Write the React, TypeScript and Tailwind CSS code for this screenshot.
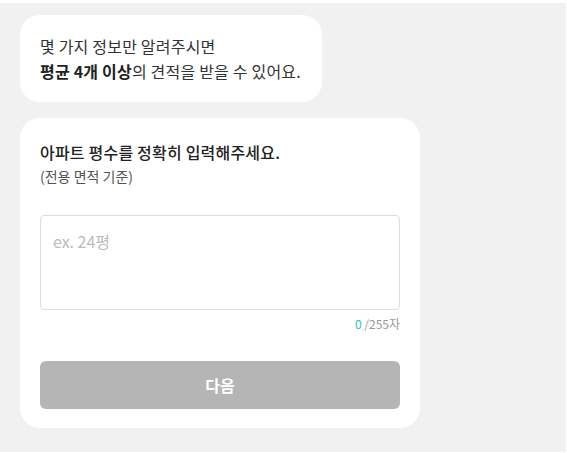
const font = { fontFamily: '"Noto Sans CJK KR", "Noto Sans", sans-serif' };

export default function App() {
  return (
    <div className="h-[453px] w-[567px] bg-white pt-[3px] pr-px" style={font}>
      <div className="h-[449px] bg-[#f1f1f1] px-5 pt-3">
        <div className="inline-block rounded-[20px] bg-white pt-[19px] pb-[18px] pl-5 pr-[21px] text-[16px] leading-[25px] tracking-[0.2px] text-[#333]">
          <p>몇 가지 정보만 알려주시면</p>
          <p>
            <span className="font-bold text-[#222]">평균 4개 이상</span>의 견적을 받을 수 있어요.
          </p>
        </div>

        <div className="mt-4 w-[400px] rounded-[20px] bg-white px-5 pt-6 pb-[19px]">
          <h2 className="text-[16px] font-medium leading-5 tracking-[0.2px] text-[#222]">아파트 평수를 정확히 입력해주세요.</h2>
          <p className="mt-1 text-[14px] leading-5 text-[#555]">(전용 면적 기준)</p>

          <textarea
            placeholder="ex. 24평"
            className="mt-[29px] block h-[95px] w-full resize-none rounded-[4px] border border-[#dddddd] px-3 pt-[13px] text-[16px] leading-6 text-[#333] outline-none placeholder:text-[#bbbbbb]"
          />
          <p className="mt-[5px] text-right text-[12px] leading-[18px] text-[#999]">
            <span className="text-[#2ec4b6]">0</span> /255자
          </p>

          <button className="mt-[28px] flex h-12 w-full items-center justify-center rounded-[6px] bg-[#b5b5b5] text-[16px] font-bold text-white">
            다음
          </button>
        </div>
      </div>
    </div>
  );
}
